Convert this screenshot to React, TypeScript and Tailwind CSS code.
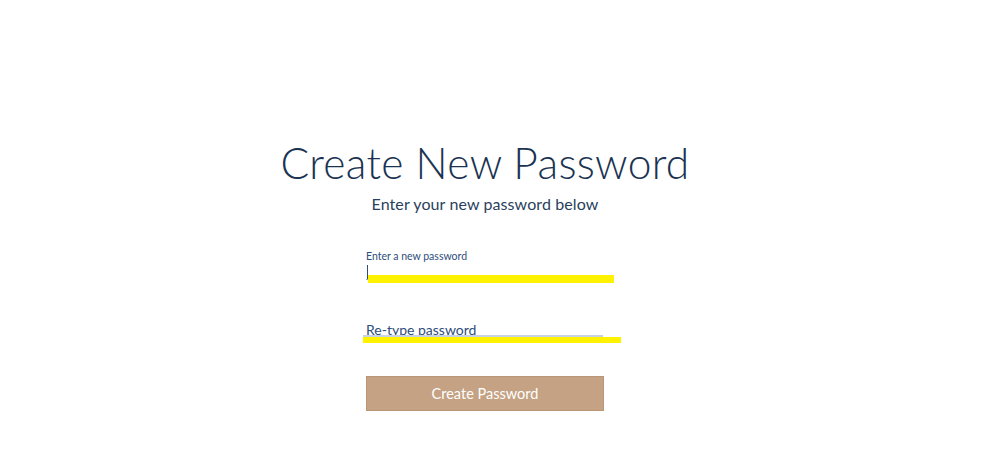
export default function App() {
  return (
    <div className="w-[1000px] h-[476px] bg-white flex justify-center pr-[30px] font-['Lato',sans-serif]">
      <div className="flex flex-col items-center pt-[139px]">
        <h1 className="text-[42.5px] leading-[48px] font-light text-[#1b3352] tracking-[0.3px]">
          Create New Password
        </h1>
        <p className="mt-[7px] text-[16px] leading-[20px] text-[#2a3f5c] tracking-[0.1px]">
          Enter your new password below
        </p>

        <form className="mt-[35px] w-[238px] flex flex-col" onSubmit={(e) => e.preventDefault()}>
          {/* new password */}
          <label className="text-[10.5px] leading-[14px] text-[#2e4d7c]">Enter a new password</label>
          <div className="relative h-[20px]">
            <div className="absolute left-[1px] top-[2px] w-px h-[14px] bg-[#2e4d7c]" />
            <div className="absolute left-0 right-0 top-[16px] h-px bg-[#9aa7b8]" />
            <div className="absolute left-[2px] w-[246px] top-[12px] h-[8px] bg-[#fff200]" />
          </div>

          {/* retype */}
          <div className="relative mt-[34px] h-[20px]">
            <span className="text-[14px] leading-[18px] text-[#2e4d7c]">Re-type password</span>
            <div className="absolute left-[-3px] w-[240px] top-[18px] h-[2px] bg-[#c6d2e4]" />
            <div className="absolute left-[-3px] w-[258px] top-[20px] h-[6px] bg-[#fff200]" />
          </div>

          <button
            type="submit"
            className="mt-[39px] h-[35px] w-[238px] bg-[#c4a283] text-white text-[14.5px] border border-[#b89676]"
          >
            Create Password
          </button>
        </form>
      </div>
    </div>
  );
}
